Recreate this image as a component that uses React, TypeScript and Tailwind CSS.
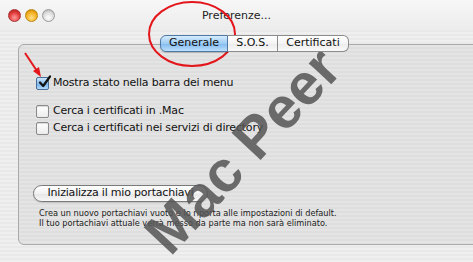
import React from "react";

const font = { fontFamily: '"DejaVu Sans", "Liberation Sans", sans-serif' };

function Light({ cls }: { cls: string }) {
  return <div className={`w-[13px] h-[13px] rounded-full border ${cls}`} />;
}

function Check({ checked }: { checked?: boolean }) {
  if (checked) {
    return (
      <div className="relative w-[13px] h-[13px] rounded-[2px] border border-[#4a6f96] bg-[linear-gradient(#cde6fb,#86bdf0_50%,#6eaee8_51%,#b3dafb)]">
        <svg className="absolute left-[1px] -top-[3px]" width="14" height="14" viewBox="0 0 14 14">
          <path d="M2 7.5 L5.2 11 L12 1.5" fill="none" stroke="#111" strokeWidth="2.2" strokeLinecap="round" strokeLinejoin="round" />
        </svg>
      </div>
    );
  }
  return <div className="w-[13px] h-[13px] rounded-[2px] border border-[#8a8a8a] bg-[linear-gradient(#ffffff,#ececec)] shadow-[inset_0_1px_1px_rgba(0,0,0,0.15)]" />;
}

export default function App() {
  return (
    <div
      className="relative w-[473px] h-[262px] overflow-hidden text-[#111] bg-[repeating-linear-gradient(180deg,#efefef_0px,#efefef_2px,#e9e9e9_2px,#e9e9e9_4px)]"
      style={font}
    >
      {/* title bar */}
      <div className="grid grid-cols-[70px_1fr_70px] items-center h-[30px] bg-[linear-gradient(#f7f7f7,#ececec)]">
        <div className="flex items-center gap-[4px] pl-[8px]">
          <Light cls="border-[#a33] bg-[radial-gradient(circle_at_50%_70%,#ff9c9c,#e13b3b_55%,#a81818)]" />
          <Light cls="border-[#b8860b] bg-[radial-gradient(circle_at_50%_70%,#ffe08a,#f5b021_55%,#c27c00)]" />
          <Light cls="border-[#9a9a9a] bg-[radial-gradient(circle_at_50%_70%,#ffffff,#dcdcdc_55%,#a9a9a9)]" />
        </div>
        <div className="text-center text-[11px] text-[#222] pt-[2px]">Preferenze...</div>
        <div />
      </div>

      {/* tabs */}
      <div className="relative z-10 flex pl-[160px] pt-[5px] text-[11px]">
        <div className="w-[68px] h-[17px] flex items-center justify-center rounded-l-[6px] border border-[#4f79a4] bg-[linear-gradient(#d7ecfd,#9ccbf3_50%,#80b9ee_51%,#bde0fc)] shadow-[0_1px_1px_rgba(0,0,0,0.2)]">
          Generale
        </div>
        <div className="w-[50px] h-[17px] flex items-center justify-center border-y border-r border-[#8c8c8c] bg-[linear-gradient(#ffffff,#f4f4f4_50%,#ebebeb_51%,#fafafa)]">
          S.O.S.
        </div>
        <div className="w-[71px] h-[17px] flex items-center justify-center rounded-r-[6px] border-y border-r border-[#8c8c8c] bg-[linear-gradient(#ffffff,#f4f4f4_50%,#ebebeb_51%,#fafafa)]">
          Certificati
        </div>
      </div>

      {/* group box */}
      <div className="-mt-[8px] ml-[18px] w-[480px] h-[201px] rounded-[6px] border border-[#a9a9a9] bg-[repeating-linear-gradient(180deg,#e4e4e4_0px,#e4e4e4_2px,#dedede_2px,#dedede_4px)] pl-[14px] pt-[30px] text-[11px] tracking-[-0.2px]">
        <div className="flex items-center gap-[4px] h-[17px] ml-[3px]">
          <Check checked />
          <span>Mostra stato nella barra dei menu</span>
        </div>
        <div className="flex items-center gap-[4px] h-[17px] ml-[3px] mt-[11px]">
          <Check />
          <span>Cerca i certificati in .Mac</span>
        </div>
        <div className="flex items-center gap-[4px] h-[17px] ml-[3px]">
          <Check />
          <span>Cerca i certificati nei servizi di directory</span>
        </div>
        <div className="mt-[48px] w-[175px] h-[17px] flex items-center justify-center rounded-full border border-[#7a7a7a] bg-[linear-gradient(#ffffff,#f2f2f2_50%,#e6e6e6_51%,#f8f8f8)] shadow-[0_1px_1px_rgba(0,0,0,0.15)]">
          Inizializza il mio portachiavi
        </div>
        <div className="mt-[6px] ml-[6px] text-[8.2px] leading-[10px] tracking-normal text-[#222]">
          <div>Crea un nuovo portachiavi vuoto e lo riporta alle impostazioni di default.</div>
          <div>Il tuo portachiavi attuale verrà messo da parte ma non sarà eliminato.</div>
        </div>
      </div>

      {/* annotations */}
      <svg className="absolute left-0 top-0 pointer-events-none" width="473" height="262">
        <ellipse cx="192" cy="34" rx="43" ry="32" fill="none" stroke="#e3161b" strokeWidth="2" />
        <line x1="25" y1="53" x2="37" y2="71" stroke="#e3161b" strokeWidth="2" />
        <polygon points="41,77 33,71 39,67" fill="#e3161b" />
      </svg>

      {/* watermark */}
      <div
        className="absolute left-[242px] top-[150px] -translate-x-1/2 -translate-y-1/2 -rotate-[47deg] whitespace-nowrap text-[58px] font-bold text-[rgba(85,85,85,0.85)] pointer-events-none"
        style={{ fontFamily: '"Liberation Sans", Arial, sans-serif' }}
      >
        Mac Peer
      </div>
    </div>
  );
}
